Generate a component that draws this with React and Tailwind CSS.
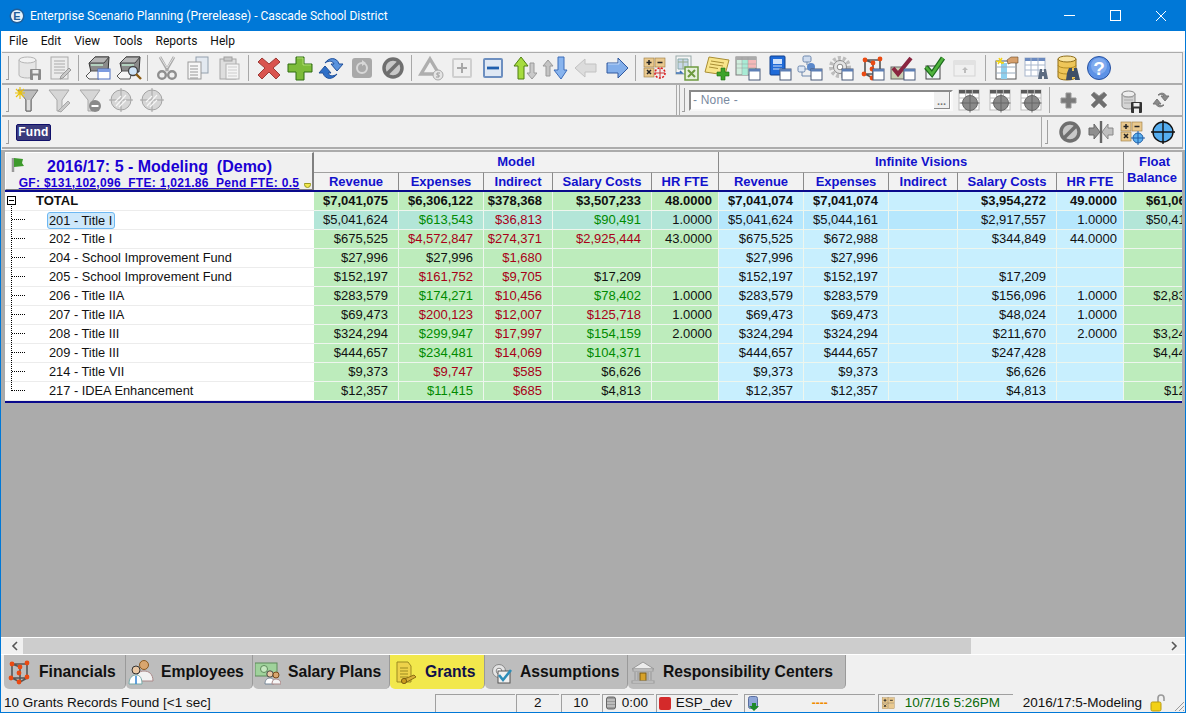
const ARIAL = 'font-["Liberation_Sans",Arial,sans-serif]'

const COLS = 'grid grid-cols-[309px_85px_85px_69px_99px_67px_85px_85px_69px_99px_67px_70px]'
const G = 'text-[#008a00]'
const R = 'text-[#a80018]'

const MODEL_COLS = ['Revenue', 'Expenses', 'Indirect', 'Salary Costs', 'HR FTE']

const ROWS = [
  { name: '201 - Title I', selected: true, cells: ['$5,041,624', ['$613,543', G], ['$36,813', R], ['$90,491', G], '1.0000', '$5,041,624', '$5,044,161', '', '$2,917,557', '1.0000', '$50,410'] },
  { name: '202 - Title I', cells: ['$675,525', ['$4,572,847', R], ['$274,371', R], ['$2,925,444', R], '43.0000', '$675,525', '$672,988', '', '$344,849', '44.0000', ''] },
  { name: '204 - School Improvement Fund', cells: ['$27,996', '$27,996', ['$1,680', R], '', '', '$27,996', '$27,996', '', '', '', ''] },
  { name: '205 - School Improvement Fund', cells: ['$152,197', ['$161,752', R], ['$9,705', R], '$17,209', '', '$152,197', '$152,197', '', '$17,209', '', ''] },
  { name: '206 - Title IIA', cells: ['$283,579', ['$174,271', G], ['$10,456', R], ['$78,402', G], '1.0000', '$283,579', '$283,579', '', '$156,096', '1.0000', '$2,830'] },
  { name: '207 - Title IIA', cells: ['$69,473', ['$200,123', R], ['$12,007', R], ['$125,718', R], '1.0000', '$69,473', '$69,473', '', '$48,024', '1.0000', ''] },
  { name: '208 - Title III', cells: ['$324,294', ['$299,947', G], ['$17,997', R], ['$154,159', G], '2.0000', '$324,294', '$324,294', '', '$211,670', '2.0000', '$3,243'] },
  { name: '209 - Title III', cells: ['$444,657', ['$234,481', G], ['$14,069', R], ['$104,371', G], '', '$444,657', '$444,657', '', '$247,428', '', '$4,447'] },
  { name: '214 - Title VII', cells: ['$9,373', ['$9,747', R], ['$585', R], '$6,626', '', '$9,373', '$9,373', '', '$6,626', '', ''] },
  { name: '217 - IDEA Enhancement', cells: ['$12,357', ['$11,415', G], ['$685', R], '$4,813', '', '$12,357', '$12,357', '', '$4,813', '', '$124'] },
]

const TOTAL = ['$7,041,075', '$6,306,122', '$378,368', '$3,507,233', '48.0000', '$7,041,074', '$7,041,074', '', '$3,954,272', '49.0000', '$61,060']

function Svg({ size = 26, children, className = '' }) {
  return (
    <svg width={size} height={size} viewBox="0 0 26 26" className={className}>
      {children}
    </svg>
  )
}

// small window badge that sits on the lower right of several toolbar icons
function Win({ x = 14, y = 14 }) {
  return (
    <g>
      <rect x={x} y={y} width="11" height="11" fill="#fff" stroke="#4a5a78" />
      <rect x={x} y={y} width="11" height="2.5" fill="#5d7fb5" />
    </g>
  )
}

function Cyl({ x, y, w, h, fill, stroke, top }) {
  return (
    <g>
      <path d={`M${x} ${y + 3}v${h - 6}c0 4 ${w} 4 ${w} 0v-${h - 6}z`} fill={fill} stroke={stroke} />
      <ellipse cx={x + w / 2} cy={y + 3} rx={w / 2} ry="3" fill={top} stroke={stroke} />
    </g>
  )
}

function Floppy({ x, y, c = '#666' }) {
  return (
    <g>
      <rect x={x} y={y} width="11" height="11" fill={c} rx="1" />
      <rect x={x + 2.5} y={y + 1} width="6" height="3.5" fill="#eee" />
      <rect x={x + 3} y={y + 6.5} width="5" height="4.5" fill="#eee" />
    </g>
  )
}

function Lines({ x, y, w, n, c = '#aaa', step = 3 }) {
  return Array.from({ length: n }).map((_, i) => (
    <path key={i} d={`M${x} ${y + i * step}h${w}`} stroke={c} strokeWidth="1" />
  ))
}

function Printer({ badge }) {
  return (
    <g>
      <path d="M4 8l6-6h14l-1 15H6z" fill="#8a8a8a" stroke="#333" />
      <path d="M10 2h14l-5 6H4z" fill="#b5b5b5" stroke="#444" />
      <path d="M6 10h12" stroke="#bfe8cf" strokeWidth="1.5" />
      <path d="M1 21l5-5h10l-2 8H4z" fill="#f6f6f6" stroke="#555" />
      {badge === 'win' && <g><rect x="13" y="14" width="12" height="10" fill="#fff" stroke="#4d6fc0" /><rect x="13" y="14" width="12" height="3" fill="#7c9be0" /></g>}
      {badge === 'lens' && <g><circle cx="17" cy="16" r="4.5" fill="#cfe4f7" stroke="#444" strokeWidth="1.3" /><path d="M20 19l5 5" stroke="#8a5a12" strokeWidth="2.4" /></g>}
    </g>
  )
}

function Funnel({ c = '#d6d6d6', s = '#a8a8a8' }) {
  return <path d="M3 3h20l-7 10v11h-5V13z" fill={c} stroke={s} />
}

function Target({ x = 13, y = 13, r = 10, fill = '#d6d6d6', s = '#a4a4a4', w = 1 }) {
  return (
    <g>
      <circle cx={x} cy={y} r={r} fill={fill} stroke={s} strokeWidth={w} />
      <path d={`M${x - r - 2} ${y}h${2 * r + 4}M${x} ${y - r - 2}v${2 * r + 4}`} stroke={s} strokeWidth={w} />
    </g>
  )
}

function Table({ x = 3, y = 3, w = 20, h = 20, head = '#5a5a5a', line = '#bbb' }) {
  return (
    <g>
      <rect x={x} y={y} width={w} height={h} fill="#fff" stroke={line} />
      <rect x={x} y={y} width={w} height="3.5" fill={head} />
      <path d={`M${x} ${y + 8}h${w}M${x} ${y + 13}h${w}M${x + w / 3} ${y}v${h}M${x + (2 * w) / 3} ${y}v${h}`} stroke={line} />
    </g>
  )
}

function Calc({ plain }) {
  const c = '#e9c98f'
  return (
    <g stroke="#9c7a3f" strokeWidth=".6">
      <rect x="2" y="3" width="10" height="9" fill={c} />
      <rect x="13" y="3" width="10" height="9" fill={c} />
      <rect x="2" y="13" width="10" height="9" fill={c} />
      {plain && <rect x="13" y="13" width="10" height="9" fill={c} />}
      <path d="M4.5 7.5h5M7 5v5M15.5 7.5h5M5 15l4 4M9 15l-4 4" stroke="#222" strokeWidth="1.5" />
    </g>
  )
}

function Cube({ win }) {
  const pts = [[6, 5], [21, 4], [14, 8], [5, 19], [13, 23], [21, 18], [13, 14]]
  return (
    <g>
      <path d="M6 5h15v14H6zM6 5l8 3M14 8v15M6 19l8 4M21 19l-7 4" fill="none" stroke="#555" strokeWidth="1.6" />
      {pts.map(([x, y], i) => <circle key={i} cx={x} cy={y} r="2.4" fill="#ea4a12" />)}
      {win && <Win x="14" y="14" />}
    </g>
  )
}

function Gear({ c = '#bdbdbd', s = '#888' }) {
  return (
    <g>
      <circle cx="12" cy="12" r="9" fill="none" stroke={c} strokeWidth="4" strokeDasharray="3 2" />
      <circle cx="12" cy="12" r="6.5" fill="#e4e4e4" stroke={s} />
      <circle cx="12" cy="12" r="2.8" fill="#fff" stroke={s} />
    </g>
  )
}

const Icons = {
  dbSave: <Svg><Cyl x={3} y={2} w={17} h={21} fill="#e6e6e6" stroke="#b5b5b5" top="#f2f2f2" /><Floppy x={14} y={14} c="#8a8a8a" /></Svg>,
  noteEdit: <Svg><rect x="4" y="2" width="17" height="22" fill="#ececec" stroke="#aaa" /><Lines x={7} y={6} w={11} n={5} /><path d="M14 21l8-8 2 2-8 8-3 1z" fill="#c8c8c8" stroke="#999" /></Svg>,
  printer: <Svg><Printer badge="win" /></Svg>,
  preview: <Svg><Printer badge="lens" /></Svg>,
  scissors: <Svg><path d="M6 2l8 14M20 2l-8 14" stroke="#a9a9a9" strokeWidth="2.6" /><path d="M6 2l7 11M20 2l-7 11" stroke="#e2e2e2" strokeWidth="1" /><circle cx="8" cy="20" r="3.8" fill="#f0f0f0" stroke="#8f8f8f" strokeWidth="2.4" /><circle cx="18" cy="20" r="3.8" fill="#f0f0f0" stroke="#8f8f8f" strokeWidth="2.4" /></Svg>,
  copy: <Svg><rect x="11" y="2" width="12" height="16" fill="#e3e9f0" stroke="#93a0ad" /><rect x="3" y="7" width="13" height="17" fill="#f7f7f7" stroke="#9a9a9a" /><Lines x={5} y={11} w={8} n={5} c="#999" /></Svg>,
  paste: <Svg><rect x="4" y="4" width="16" height="20" fill="#dedede" stroke="#a6a6a6" /><rect x="8" y="2" width="8" height="4" fill="#c9c9c9" stroke="#a0a0a0" /><rect x="10" y="9" width="13" height="15" fill="#f4f4f4" stroke="#b2b2b2" /><Lines x={12} y={12} w={9} n={4} c="#ccc" /></Svg>,
  redX: <Svg><path d="M6 3l7 6 7-6 4 4-7 6 7 7-4 4-7-7-7 7-4-4 7-7-7-6z" fill="#d9544f" stroke="#9c3a36" /></Svg>,
  greenPlus: <Svg><path d="M9 2h8v7h8v8h-8v8H9v-8H1V9h8z" fill="#7dbb3a" stroke="#2f6d10" /><path d="M10 3h6v7h8" fill="none" stroke="#aedc73" /></Svg>,
  refresh: <Svg><path d="M7 8c4-6 12-6 14 1h4l-6 7-6-7h3c-1-3-5-4-9-1z" fill="#5a93dd" stroke="#1f4f9a" /><path d="M19 19c-4 6-12 6-14-1H1l6-7 6 7h-3c1 3 5 4 9 1z" fill="#2f70c8" stroke="#1f4f9a" /></Svg>,
  grayRefresh: <Svg><rect x="3" y="3" width="20" height="20" rx="3" fill="#a9a9a9" /><circle cx="13" cy="13" r="5" fill="none" stroke="#d8d8d8" strokeWidth="2" /><path d="M13 5l4 3-4 3z" fill="#d8d8d8" /></Svg>,
  no: <Svg><circle cx="13" cy="13" r="9" fill="#c8c8c8" stroke="#6f6f6f" strokeWidth="3.5" /><path d="M7 19L19 7" stroke="#6f6f6f" strokeWidth="3.5" /></Svg>,
  triangle: <Svg><path d="M12 4l9 15H3z" fill="none" stroke="#aeaeae" strokeWidth="3.4" /><circle cx="20" cy="20" r="5" fill="#e4e4e4" stroke="#a8a8a8" /><path d="M22 18h-3v2h2v2h-3" fill="none" stroke="#999" /></Svg>,
  plusBox: <Svg><rect x="4" y="4" width="18" height="18" rx="1" fill="#efefef" stroke="#cfcfcf" strokeWidth="2" /><path d="M8 13h10M13 8v10" stroke="#a8a8a8" strokeWidth="2" /></Svg>,
  minusBox: <Svg><rect x="4" y="4" width="18" height="18" rx="1" fill="#dfe8f4" stroke="#6d8fc0" strokeWidth="2" /><path d="M7 13h12" stroke="#1f5fae" strokeWidth="2.8" /></Svg>,
  upGreen: <Svg><path d="M10 2l7 9h-4v13H7V11H3z" fill="#a6dc3e" stroke="#4f7f10" /><path d="M19 8h4v10h3l-5 6-5-6h3z" fill="#c9c9c9" stroke="#9a9a9a" /></Svg>,
  downBlue: <Svg><path d="M16 2h6v13h3l-6 9-7-9h4z" fill="#88b4ee" stroke="#3d6cb8" /><path d="M6 5l5 6H8v10H4V11H1z" fill="#c4c4c4" stroke="#9a9a9a" /></Svg>,
  leftGray: <Svg><path d="M2 13l10-9v5h11v8H12v5z" fill="#dcdcdc" stroke="#c2c2c2" /></Svg>,
  rightBlue: <Svg><path d="M24 13L14 3v5H3v10h11v5z" fill="#82aeea" stroke="#30589e" /><path d="M4 9h11V5" fill="none" stroke="#c0d6f6" /></Svg>,
  calcRed: <Svg><Calc /><circle cx="18" cy="18" r="5" fill="none" stroke="#dd1c1c" strokeWidth="1.6" strokeDasharray="2 1.4" /><path d="M13 18h10M18 13v10" stroke="#c33" /></Svg>,
  excel: <Svg><rect x="3" y="1" width="15" height="18" fill="#f4f4f4" stroke="#9aa" /><path d="M5 4h10v10H5z" fill="#c9d8ea" stroke="#8aa" /><path d="M5 7h10M10 4v10" stroke="#9a8" /><rect x="12" y="12" width="13" height="13" fill="#e6f0dc" stroke="#6d9a3f" strokeWidth="1.5" /><path d="M15 15l7 7M22 15l-7 7" stroke="#6d9a3f" strokeWidth="2" /><path d="M3 18h6l-2-2" fill="none" stroke="#3b6fb5" strokeWidth="1.5" /></Svg>,
  notePlus: <Svg><path d="M5 2l20 3-4 15-20-3z" fill="#f8e48a" stroke="#a98e34" /><path d="M7 6l13 2M6 9l13 2M5 12l9 1.5" stroke="#a98e34" /><path d="M17 13h4v4h4v4h-4v4h-4v-4h-4v-4h4z" fill="#3da32a" stroke="#1d6b12" strokeWidth=".6" /></Svg>,
  gridWin: <Svg><rect x="1" y="2" width="20" height="18" fill="#cfeedd" stroke="#7a7a7a" /><rect x="7" y="5" width="6" height="15" fill="#a8ebd5" /><rect x="13" y="5" width="8" height="8" fill="#f4b8b8" /><rect x="1" y="2" width="20" height="3" fill="#aaa" /><path d="M1 9h20M1 13h20M7 2v18M13 2v18" stroke="#999" strokeWidth=".5" /><Win /></Svg>,
  book: <Svg><rect x="4" y="1" width="15" height="19" rx="1" fill="#1f6ad8" stroke="#12408c" /><rect x="7" y="4" width="9" height="5" fill="#cfe1fa" /><path d="M7 11h9M7 14h9" stroke="#cfe1fa" /><Win /></Svg>,
  tree: <Svg><rect x="6" y="1" width="8" height="6" rx="1.5" fill="#cfdcef" stroke="#6c87ad" /><rect x="1" y="11" width="7" height="6" rx="1.5" fill="#dde7f5" stroke="#6c87ad" /><circle cx="14" cy="12" r="4" fill="#5a87c9" /><path d="M10 7v3M8 14h3M5 17v4h9" fill="none" stroke="#6c87ad" /><Win /></Svg>,
  gear: <Svg><Gear /><Win /></Svg>,
  cube: <Svg><Cube win /></Svg>,
  checkRed: <Svg><rect x="1" y="12" width="13" height="12" fill="#c9d0b4" stroke="#666" /><path d="M3 13l5 6L21 3" fill="none" stroke="#8a2540" strokeWidth="4" /><Win /></Svg>,
  checkGreen: <Svg><rect x="5" y="11" width="14" height="13" fill="#eef3f7" stroke="#444" /><path d="M5 12l6 7L22 3" fill="none" stroke="#1d6b1d" strokeWidth="5" /><path d="M5 12l6 7L22 3" fill="none" stroke="#4fb23d" strokeWidth="2.6" /></Svg>,
  tabGray: <Svg><rect x="2" y="6" width="21" height="15" fill="#f0f0f0" stroke="#d4d4d4" /><path d="M2 6h21v4H2z" fill="#e2e2e2" /><path d="M13 12l3 3h-2v3h-2v-3h-2z" fill="#bdbdbd" /></Svg>,
  tableHand: <Svg><rect x="3" y="6" width="20" height="18" fill="#fff" stroke="#555" /><rect x="8" y="8" width="6" height="16" fill="#8fd0ee" /><path d="M3 6h20M3 12h20M3 18h20" stroke="#9ab" /><path d="M14 5l4-3h7v6h-7l-3 1z" fill="#d6a06c" stroke="#6b4a2a" strokeWidth=".6" /><path d="M6 3l3 6M3 6l8 2M9 3L5 9" stroke="#f2d416" strokeWidth="1.4" /></Svg>,
  tableBino: <Svg><rect x="1" y="3" width="20" height="18" fill="#fff" stroke="#a8b6cc" /><rect x="1" y="3" width="20" height="3" fill="#6b8ac0" /><path d="M1 10h20M1 15h20M7 3v18M14 3v18" stroke="#a8b6cc" /><path d="M15 18l1-4h2v3h2v-3h2l2 10h-4v-3h-2v3h-4z" fill="#5c6b80" /></Svg>,
  dbBino: <Svg><Cyl x={3} y={1} w={18} h={24} fill="#eec659" stroke="#8f6d18" top="#f8e4a0" /><path d="M3 10c0 4 18 4 18 0M3 16c0 4 18 4 18 0" fill="none" stroke="#b58d22" /><path d="M12 18l2-5h3v3h2v-3h3l3 12h-5v-3h-3v3h-6z" fill="#3f4f66" /></Svg>,
  help: <svg width="26" height="26" viewBox="0 0 26 26"><circle cx="13" cy="13" r="11.5" fill="#5d92e6" stroke="#26509f" /><circle cx="13" cy="11" r="8" fill="#7faaee" /><text x="13" y="20" textAnchor="middle" fontFamily="Liberation Sans" fontWeight="700" fontSize="19" fill="#fff">?</text></svg>,
  funnelNew: <Svg><Funnel c="#bdbdbd" s="#777" /><path d="M16 13v11h-5V13" fill="#dedede" stroke="#666" /><path d="M1 2l8 8M9 2l-8 8M5 0v12M0 6h10" stroke="#e9c20c" strokeWidth="1.1" /></Svg>,
  funnelEdit: <Svg><Funnel /><path d="M12 24l10-10 2 2-9 9z" fill="#c8c8c8" stroke="#a8a8a8" /></Svg>,
  funnelMinus: <Svg><Funnel /><circle cx="18" cy="19" r="6" fill="#8a8a8a" /><path d="M14.5 19h7" stroke="#fff" strokeWidth="2" /></Svg>,
  target: <Svg><Target /><path d="M8 19l10-11M7 15l6-6M11 20l7-7" stroke="#f6f6f6" strokeWidth="1.2" /></Svg>,
  tableTarget: <Svg><Table /><Target x={14} y={16} r={7.5} fill="#8a8a8a" s="#666" /></Svg>,
  grayPlus: <Svg><path d="M11 6h5v5h5v5h-5v5h-5v-5H6v-5h5z" fill="#7a7a7a" stroke="#999" /></Svg>,
  grayX: <Svg><path d="M8 5l5 4 5-4 3 3-5 5 5 5-3 3-5-5-5 5-3-3 5-5-5-5z" fill="#6f6f6f" stroke="#999" /></Svg>,
  dbFloppy: <Svg><Cyl x={5} y={4} w={13} h={18} fill="#d4d4d4" stroke="#888" top="#eee" /><Lines x={7} y={10} w={9} n={3} c="#aaa" /><Floppy x={14} y={15} c="#333" /></Svg>,
  grayRefresh2: <Svg><path d="M10 8c3-3 7-2 8 1h3l-4 5-4-5h3c-1-2-3-2-5-1z" fill="#8a8a8a" stroke="#777" /><path d="M16 18c-3 3-7 2-8-1H5l4-5 4 5h-3c1 2 3 2 5 1z" fill="#8a8a8a" stroke="#777" /></Svg>,
  merge: <Svg><path d="M13 2v22" stroke="#666" strokeWidth="2.4" /><path d="M1 9h5V5l6 8-6 7v-4H1z" fill="#8e8e8e" stroke="#666" /><path d="M25 9h-5V5l-6 8 6 7v-4h5z" fill="#c0c0c0" stroke="#888" /></Svg>,
  calcTarget: <Svg><Calc /><Target x={19} y={19} r={5} fill="#5cb0ee" s="#1f5fa8" /></Svg>,
  blueTarget: <Svg><Target r={10} fill="#55aef0" s="#111" w={1.4} /></Svg>,
}

function Slot({ name }) {
  return <div className="flex w-[31px] shrink-0 items-center justify-center">{Icons[name]}</div>
}

function Sep({ w = 'w-[7px]' }) {
  return (
    <div className={`flex h-[26px] shrink-0 justify-center ${w}`}>
      <div className="w-px bg-[#a8a8a8]" />
    </div>
  )
}

function Grip() {
  return <div className="h-[24px] w-[3px] shrink-0 border-r border-b border-[#a0a0a0]" />
}

function Toolbar1() {
  return (
    <div className="flex h-[32px] items-center border-b-2 border-[#acacac] pl-[4px]">
      <Grip />
      <div className="w-[4px]" />
      <Slot name="dbSave" /><Slot name="noteEdit" />
      <Sep />
      <Slot name="printer" /><Slot name="preview" />
      <Sep />
      <Slot name="scissors" /><Slot name="copy" /><Slot name="paste" />
      <Sep w="w-[9px]" />
      <Slot name="redX" /><Slot name="greenPlus" /><Slot name="refresh" /><Slot name="grayRefresh" /><Slot name="no" />
      <Sep />
      <Slot name="triangle" /><Slot name="plusBox" /><Slot name="minusBox" /><Slot name="upGreen" /><Slot name="downBlue" /><Slot name="leftGray" /><Slot name="rightBlue" />
      <Sep />
      <Slot name="calcRed" /><Slot name="excel" /><Slot name="notePlus" /><Slot name="gridWin" /><Slot name="book" /><Slot name="tree" /><Slot name="gear" /><Slot name="cube" /><Slot name="checkRed" /><Slot name="checkGreen" /><Slot name="tabGray" />
      <Sep w="w-[10px]" />
      <Slot name="tableHand" /><Slot name="tableBino" /><Slot name="dbBino" /><Slot name="help" />
    </div>
  )
}

function Toolbar2() {
  return (
    <div className="flex h-[32px] border-b-2 border-[#acacac]">
      <div className="flex w-[675px] items-center border-r border-[#a8a8a8] pl-[4px]">
        <Grip />
        <div className="w-[3px]" />
        <Slot name="funnelNew" /><Slot name="funnelEdit" /><Slot name="funnelMinus" /><Slot name="target" /><Slot name="target" />
      </div>
      <div className="ml-[2px] flex flex-1 items-center border-l border-[#a8a8a8] pl-[2px]">
        <Grip />
        <div className="ml-[4px] flex h-[21px] w-[264px] items-center border-2 border-[#8a8a8a] border-r-[#f8f8f8] border-b-[#f8f8f8] bg-white pl-[2px] pr-[1px]">
          <span className="flex-1 text-[12px] tracking-[.2px] text-[#7a8aa0]">- None -</span>
          <span className="flex h-[17px] w-[16px] items-end justify-center border-r border-b border-[#8a8a8a] bg-[#f0f0f0] text-[11px] font-bold leading-[13px] text-[#777]">...</span>
        </div>
        <Slot name="tableTarget" /><Slot name="tableTarget" /><Slot name="tableTarget" />
        <Sep w="w-[6px]" />
        <Slot name="grayPlus" /><Slot name="grayX" /><Slot name="dbFloppy" /><Slot name="grayRefresh2" />
      </div>
    </div>
  )
}

function Toolbar3() {
  return (
    <div className="flex h-[32px] items-center border-b-2 border-[#acacac] pl-[4px]">
      <Grip />
      <span className="ml-[7px] flex h-[17px] w-[35px] items-center justify-center rounded-[2px] border border-[#10106a] bg-[#3b3b7c] text-[12px] font-bold tracking-[.3px] text-white">Fund</span>
      <div className="ml-auto flex h-full items-center border-l border-[#a8a8a8] pl-[3px]">
        <Grip />
        <div className="w-[6px]" />
        <Slot name="no" /><Slot name="merge" /><Slot name="calcTarget" /><Slot name="blueTarget" />
        <div className="w-[4px]" />
      </div>
    </div>
  )
}

function TreeLines() {
  return (
    <svg width="40" height="212" viewBox="0 0 40 212" className="absolute left-0 top-0">
      <path d="M6.5 14V199" stroke="#000" strokeDasharray="1 1" />
      {ROWS.map((_, i) => (
        <path key={i} d={`M7 ${27.5 + i * 19}H20`} stroke="#000" strokeDasharray="1 1" />
      ))}
      <rect x="2.5" y="4.5" width="8" height="8" fill="#fff" stroke="#000" />
      <path d="M4 8.5h5" stroke="#000" />
    </svg>
  )
}

function Cell({ value, bold, bg, pr = 'pr-[10px]' }) {
  const [text, color] = Array.isArray(value) ? value : [value, 'text-[#111]']
  return (
    <div className={`h-[19px] overflow-hidden whitespace-nowrap border-r border-b border-[#eef6ee] text-right text-[13px] leading-[18px] ${pr} ${bold ? 'font-bold' : ''} ${color} ${bg}`}>
      {text}
    </div>
  )
}

function GridRow({ name, cells, selected, bold }) {
  const green = selected ? 'bg-[#b3e6d8]' : 'bg-[#bdecbc]'
  const blue = selected ? 'bg-[#b6e7fd]' : 'bg-[#c8effe]'
  return (
    <div className={COLS}>
      <div className={`flex h-[19px] items-center border-b border-[#ececec] bg-white text-[12.8px] text-[#111] ${bold ? 'pl-[31px] text-[13px] font-bold' : 'pl-[44px]'}`}>
        {selected ? (
          <span className="-ml-[2px] rounded-[3px] border border-[#6db8f2] bg-[#cde8fb] pl-[1px] pr-[2px] leading-[15px]">{name}</span>
        ) : name}
      </div>
      {cells.map((c, i) => (
        <Cell
          key={i}
          value={c}
          bold={bold}
          bg={i < 5 || i === 10 ? green : blue}
          pr={i === 4 ? 'pr-[6px]' : i === 9 ? 'pr-[6px]' : i === 10 ? 'pr-[0px]' : 'pr-[10px]'}
        />
      ))}
    </div>
  )
}

function HeadLabel({ children }) {
  return (
    <div className="flex h-[18px] items-center justify-center border-t border-r border-t-[#a0a0a0] border-r-[#8a8a8a] bg-[#f2f2f2] text-[13px] font-bold text-[#1111cc]">
      {children}
    </div>
  )
}

function SheetHeader() {
  return (
    <div className={`${COLS} border-b-2 border-[#0a0a8c]`}>
      <div className="relative row-span-2 flex flex-col items-center border-t border-l border-r-2 border-b border-t-white border-l-white border-r-[#808080] border-b-[#808080] bg-[#f0f0f0]">
        <svg width="14" height="16" viewBox="0 0 14 16" className="absolute left-[5px] top-[4px]">
          <path d="M2 1v14" stroke="#999" strokeWidth="2.5" />
          <path d="M3 1l9 1-1 4 2 3-10 1z" fill="#3d9a2c" />
        </svg>
        <div className="mt-[4px] whitespace-pre pl-[1px] text-[16px] font-bold leading-[20px] text-[#1a00d4]">2016/17: 5 - Modeling  (Demo)</div>
        <div className="whitespace-pre text-[12px] font-bold leading-[12px] tracking-[.3px] text-[#1a00d4] underline">GF: $131,102,096  FTE: 1,021.86  Pend FTE: 0.5</div>
        <span className="absolute bottom-[1px] right-[1px] h-[5px] w-[7px] rounded-b-full border border-[#9a9a20] bg-[#f2e84c]" />
      </div>
      <div className="col-span-5 flex h-[20px] items-center justify-center border-r border-[#8a8a8a] bg-[#f2f2f2] text-[13px] font-bold text-[#1111cc]">Model</div>
      <div className="col-span-5 flex h-[20px] items-center justify-center border-r border-[#8a8a8a] bg-[#f2f2f2] text-[13px] font-bold text-[#1111cc]">Infinite Visions</div>
      <div className="row-span-2 bg-[#f2f2f2] pl-[3px] pt-[2px] text-[13px] font-bold leading-[16px] text-[#1111cc]">
        <div className="w-[55px] text-center">Float</div>
        <div>Balance</div>
      </div>
      {MODEL_COLS.map((c) => <HeadLabel key={c}>{c}</HeadLabel>)}
      {MODEL_COLS.map((c) => <HeadLabel key={c}>{c}</HeadLabel>)}
    </div>
  )
}

function Sheet() {
  return (
    <div className={`flex-1 overflow-hidden bg-[#ababab] pl-[4px] pr-[3px] pt-[2px] ${ARIAL}`}>
      <div className="overflow-hidden">
        <div className="w-[1200px]">
          <SheetHeader />
          <div className="relative border-b-2 border-[#0a0a8c]">
            <GridRow name="TOTAL" cells={TOTAL} bold />
            {ROWS.map((r) => <GridRow key={r.name} {...r} />)}
            <TreeLines />
          </div>
        </div>
      </div>
    </div>
  )
}

function ScrollBar() {
  return (
    <div className="flex h-[18px] items-center border-y border-white bg-[#f0f0f0] pl-[5px] pr-[3px]">
      <span className="flex h-[16px] w-[17px] items-center justify-center">
        <svg width="8" height="10" viewBox="0 0 8 10"><path d="M6 1L2 5l4 4" fill="none" stroke="#555" strokeWidth="1.6" /></svg>
      </span>
      <div className="h-[16px] w-[948px] bg-[#cdcdcd]" />
      <div className="flex-1" />
      <span className="flex h-[16px] w-[17px] items-center justify-center">
        <svg width="8" height="10" viewBox="0 0 8 10"><path d="M2 1l4 4-4 4" fill="none" stroke="#555" strokeWidth="1.6" /></svg>
      </span>
    </div>
  )
}

const TabIcons = {
  cube: <Svg size={26}><Cube /></Svg>,
  people: (
    <Svg size={26}>
      <circle cx="16" cy="6" r="4.5" fill="#d9a66f" stroke="#8a5a22" />
      <path d="M8 22c0-7 3-10 8-10s9 3 9 10z" fill="#f2f2f2" stroke="#a88" />
      <circle cx="8" cy="11" r="4" fill="#e8c7a4" stroke="#333" />
      <path d="M1 25c0-6 3-9 7-9s6 3 6 9z" fill="#fff" stroke="#7aa" />
      <path d="M8 17v8" stroke="#3a8ad8" strokeWidth="1.6" />
    </Svg>
  ),
  money: (
    <Svg size={26}>
      <rect x="0" y="4" width="22" height="13" fill="#9fd29b" stroke="#5d8a5a" />
      <circle cx="9" cy="10" r="3.5" fill="#c6e8c0" stroke="#5d8a5a" />
      <circle cx="15" cy="15" r="3.2" fill="#e8c7a4" stroke="#444" />
      <path d="M10 25c0-4 2-6 5-6s4 2 4 6z" fill="#fff" stroke="#789" />
      <circle cx="21" cy="16" r="3" fill="#d9a66f" stroke="#7a4a1a" />
      <path d="M17 25c0-3 1-5 4-5s5 2 5 5z" fill="#f5f5f5" stroke="#a88" />
    </Svg>
  ),
  grant: (
    <Svg size={26}>
      <path d="M5 3h11l3 4v16H5z" fill="#eed24a" stroke="#9b8a20" />
      <Lines x={8} y={9} w={8} n={4} c="#9b8a20" />
      <path d="M10 21l12-5 2 2-11 6z" fill="#d9b13a" stroke="#8b6d12" />
      <circle cx="12" cy="22" r="2.6" fill="#c99a1e" stroke="#7b5d12" />
    </Svg>
  ),
  gearCheck: (
    <Svg size={26}>
      <Gear />
      <rect x="11" y="12" width="12" height="12" fill="#f0f0f0" stroke="#555" />
      <path d="M12 16l4 5 8-10" fill="none" stroke="#2d8db8" strokeWidth="2.6" />
    </Svg>
  ),
  bank: (
    <Svg size={26}>
      <path d="M2 10L13 3l11 7z" fill="#ececec" stroke="#999" />
      <rect x="3" y="10" width="20" height="2" fill="#ddd" stroke="#999" />
      <path d="M5 13v8M8 13v8M18 13v8M21 13v8" stroke="#aaa" strokeWidth="2" />
      <rect x="10" y="14" width="6" height="8" fill="#d7a22a" stroke="#7a5a12" />
      <rect x="2" y="22" width="22" height="2" fill="#ddd" stroke="#999" />
    </Svg>
  ),
}

const TABS = [
  { label: 'Financials', icon: 'cube', w: 'w-[122px]' },
  { label: 'Employees', icon: 'people', w: 'w-[127px]' },
  { label: 'Salary Plans', icon: 'money', w: 'w-[137px]' },
  { label: 'Grants', icon: 'grant', w: 'w-[95px]', active: true },
  { label: 'Assumptions', icon: 'gearCheck', w: 'w-[143px]' },
  { label: 'Responsibility Centers', icon: 'bank', w: 'w-[218px]' },
]

function Tabs() {
  return (
    <div className={`flex h-[36px] pl-[3px] ${ARIAL}`}>
      {TABS.map((t) => (
        <div
          key={t.label}
          className={`flex h-[34px] items-center gap-[7px] rounded-b-[5px] border-r border-[#9a9a9a] pl-[2px] text-[15.7px] font-bold ${t.w} ${t.active ? 'bg-[#f2e84c] text-[#10104a]' : 'bg-[#bdbdbd] text-[#111]'}`}
        >
          {TabIcons[t.icon]}
          <span>{t.label}</span>
        </div>
      ))}
    </div>
  )
}

function Panel({ className = '', children }) {
  return (
    <div className={`flex h-[18px] shrink-0 items-center border-t border-l border-[#a0a0a0] ${className}`}>
      {children}
    </div>
  )
}

function StatusBar() {
  return (
    <div className={`flex h-[21px] items-center pl-[3px] pt-[2px] text-[13.5px] text-[#111] ${ARIAL}`}>
      <span className="mt-[2px] flex-1 whitespace-nowrap">10 Grants Records Found [&lt;1 sec]</span>
      <Panel className="w-[80px]" />
      <Panel className="ml-px w-[43px] justify-center">2</Panel>
      <Panel className="ml-[2px] w-[39px] justify-center">10</Panel>
      <Panel className="ml-[2px] w-[52px] gap-[6px] pl-[3px]">
        <svg width="10" height="14" viewBox="0 0 10 14"><rect x="0.5" y="1" width="9" height="12" rx="2" fill="#999" stroke="#666" /><path d="M1 4h8M1 7h8M1 10h8" stroke="#ddd" /></svg>
        0:00
      </Panel>
      <Panel className="ml-[2px] w-[82px] gap-[5px] pl-[2px]">
        <span className="h-[13px] w-[12px] rounded-[2px] bg-[#d42a2a]" />
        ESP_dev
      </Panel>
      <Panel className="ml-[6px] w-[131px] pl-[3px]">
        <svg width="12" height="15" viewBox="0 0 12 15"><rect x="0.5" y="0.5" width="9" height="12" rx="2" fill="#8fa6d8" stroke="#5a6fa0" /><path d="M4 7h4v3h3l-5 5-5-5h3z" fill="#1f8a2a" /></svg>
        <span className="ml-[52px] text-[12px] font-bold leading-none text-[#f08a00]">----</span>
      </Panel>
      <Panel className="ml-[3px] w-[135px] gap-[9px] pl-[2px] text-[#0a6a0a]">
        <Svg size={15}><Calc plain /></Svg>
        10/7/16 5:26PM
      </Panel>
      <span className="ml-[10px] mt-[1px] whitespace-nowrap">2016/17:5-Modeling</span>
      <svg width="16" height="18" viewBox="0 0 16 18" className="ml-[8px]">
        <path d="M8 8V4c0-4 6-4 6 0v3" fill="none" stroke="#999" strokeWidth="1.6" />
        <rect x="1" y="8" width="10" height="9" rx="1.5" fill="#f2d016" stroke="#b89a10" />
      </svg>
      <svg width="12" height="12" viewBox="0 0 12 12" className="ml-[7px] mt-[6px]">
        <path d="M11 2L2 11M11 6l-5 5M11 10l-1 1" stroke="#999" />
      </svg>
    </div>
  )
}

export default function App() {
  return (
    <div className={`flex h-[713px] flex-col overflow-hidden border-x border-b border-[#0078d7] bg-[#f0f0f0] ${ARIAL}`}>
      {/* title bar */}
      <div className="-mx-px flex h-[31px] shrink-0 items-center bg-[#0078d7] pl-[9px] text-white">
        <svg width="16" height="16" viewBox="0 0 16 16">
          <circle cx="8" cy="8" r="7.5" fill="#1f5f9a" />
          <circle cx="8" cy="8" r="6" fill="#e8f2fb" />
          <text x="8" y="12" textAnchor="middle" fontFamily="Liberation Sans" fontWeight="700" fontSize="11" fill="#1f5f9a">E</text>
        </svg>
        <span className="ml-[5px] font-['Roboto',sans-serif] text-[12px]">Enterprise Scenario Planning (Prerelease) - Cascade School District</span>
        <div className="ml-auto flex items-center pr-[2px]">
          <div className="flex w-[46px] justify-center"><div className="h-px w-[11px] bg-white" /></div>
          <div className="flex w-[46px] justify-center"><div className="h-[11px] w-[11px] border border-white" /></div>
          <div className="flex w-[46px] justify-center">
            <svg width="12" height="12" viewBox="0 0 12 12"><path d="M1 1l10 10M11 1L1 11" stroke="#fff" /></svg>
          </div>
        </div>
      </div>
      {/* menu */}
      <div className="flex h-[20px] shrink-0 items-center gap-[13px] bg-white pl-[8px] font-['Roboto',sans-serif] text-[12px] text-[#111]">
        {['File', 'Edit', 'View', 'Tools', 'Reports', 'Help'].map((m) => <span key={m}>{m}</span>)}
      </div>
      <div className="ml-[1px] mr-[2px] mt-[1px] border-t border-r border-[#acacac]">
        <Toolbar1 />
        <Toolbar2 />
        <Toolbar3 />
      </div>
      <div className="h-[1px] shrink-0" />
      <Sheet />
      <ScrollBar />
      <Tabs />
      <StatusBar />
    </div>
  )
}
